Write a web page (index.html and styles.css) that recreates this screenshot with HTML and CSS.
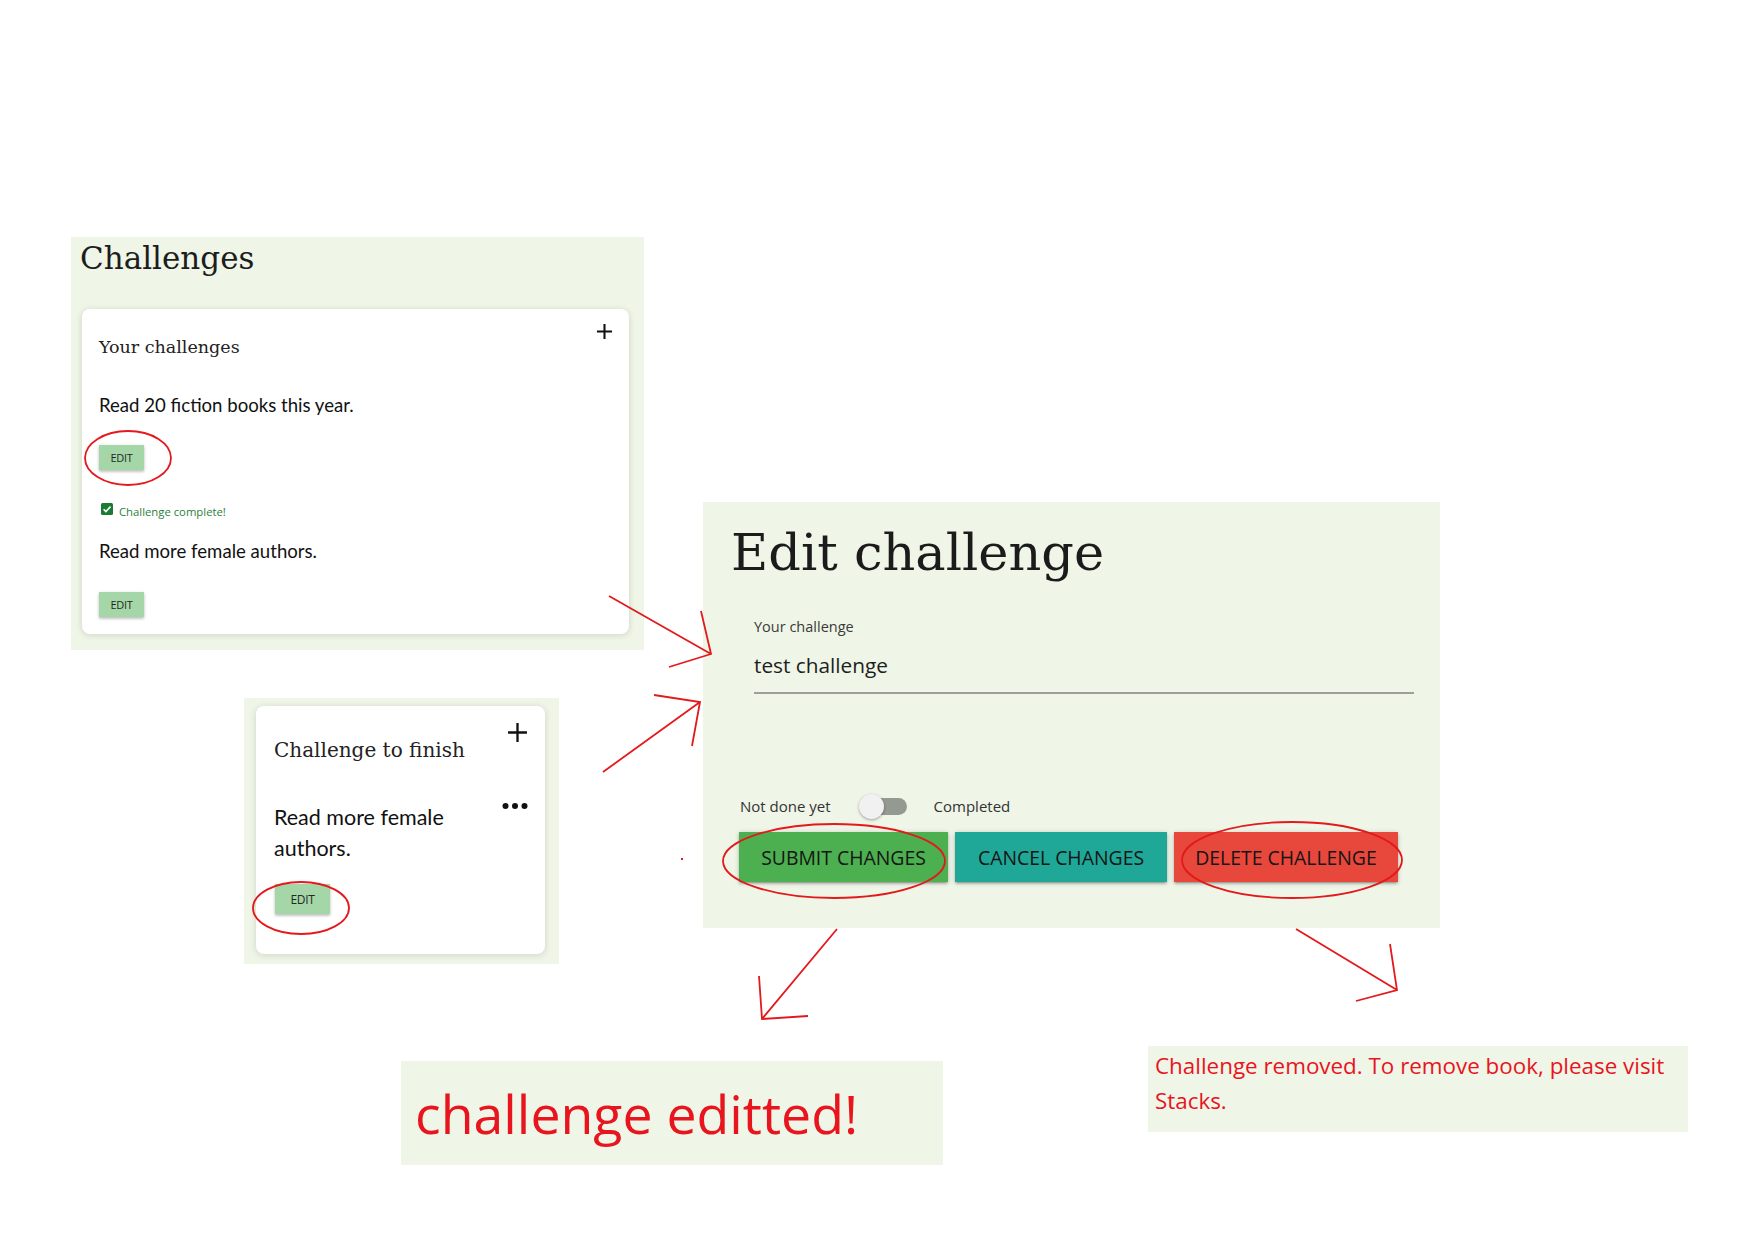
FILE: index.html
```html
<!DOCTYPE html>
<html lang="en">
<head>
<meta charset="utf-8">
<title>Challenges – annotated</title>
<link rel="stylesheet" href="styles.css">
</head>
<body>
<div class="canvas">

  <section class="panel panel-challenges">
    <h1 class="page-title">Challenges</h1>
    <div class="card card-main">
      <div class="card-head">
        <h2 class="card-title">Your challenges</h2>
        <svg class="plus" viewBox="0 0 18 18" aria-hidden="true"><path d="M9 1v16M1 9h16" stroke="#111" stroke-width="2.2" fill="none"/></svg>
      </div>
      <p class="challenge-text first">Read 20 fiction books this year.</p>
      <button class="btn-edit first-edit">EDIT</button>
      <label class="complete">
        <svg class="checkbox" viewBox="0 0 12 12" aria-hidden="true"><rect x="0" y="0" width="12" height="12" rx="1.5" fill="#1b7a34"/><path d="M2.6 6.2l2.3 2.4 4.6-5" stroke="#fff" stroke-width="1.6" fill="none"/></svg>
        <span>Challenge complete!</span>
      </label>
      <p class="challenge-text second">Read more female authors.</p>
      <button class="btn-edit second-edit">EDIT</button>
    </div>
  </section>

  <section class="panel panel-finish">
    <div class="card card-finish">
      <div class="finish-head">
        <h2 class="finish-title">Challenge to finish</h2>
        <svg class="plus plus-lg" viewBox="0 0 20 20" aria-hidden="true"><path d="M10 1v18M1 10h18" stroke="#111" stroke-width="2.2" fill="none"/></svg>
      </div>
      <div class="finish-body">
        <p class="finish-text">Read more female authors.</p>
        <svg class="dots" viewBox="0 0 26 8" aria-hidden="true"><circle cx="3.5" cy="4" r="3" fill="#111"/><circle cx="13" cy="4" r="3" fill="#111"/><circle cx="22.5" cy="4" r="3" fill="#111"/></svg>
      </div>
      <button class="btn-edit btn-edit-lg">EDIT</button>
    </div>
  </section>

  <section class="panel panel-edit">
    <h1 class="edit-title">Edit challenge</h1>
    <div class="field">
      <label class="field-label">Your challenge</label>
      <div class="field-input">test challenge</div>
    </div>
    <div class="switch-row">
      <span class="switch-label">Not done yet</span>
      <span class="lever"><span class="thumb"></span></span>
      <span class="switch-label">Completed</span>
    </div>
    <div class="actions">
      <button class="btn btn-submit">SUBMIT CHANGES</button>
      <button class="btn btn-cancel">CANCEL CHANGES</button>
      <button class="btn btn-delete">DELETE CHALLENGE</button>
    </div>
  </section>

  <section class="panel panel-msg-edit">
    <p class="msg-big">challenge editted!</p>
  </section>

  <section class="panel panel-msg-remove">
    <p class="msg-small">Challenge removed. To remove book, please visit Stacks.</p>
  </section>

  <svg class="annotations" viewBox="0 0 1739 1234" aria-hidden="true">
    <g fill="none" stroke="#e3191c" stroke-width="1.8">
      <ellipse cx="128" cy="458" rx="43" ry="27"/>
      <ellipse cx="301" cy="908" rx="48" ry="26"/>
      <ellipse cx="834" cy="861" rx="111" ry="37"/>
      <ellipse cx="1292" cy="860" rx="110" ry="38"/>
      <path d="M609 596L711 654M701 611L711 654L669 667"/>
      <path d="M603 772L700 702M654 695L700 702L692 746"/>
      <path d="M837 929L762 1019M759 976L762 1019L808 1016"/>
      <path d="M1296 929L1397 990M1390 944L1397 990L1356 1001"/>
    </g>
    <rect x="681" y="858" width="2" height="2" fill="#e3191c"/>
  </svg>
</div>
</body>
</html>
```

FILE: styles.css
```css
* { box-sizing: border-box; }

html, body {
  margin: 0;
  padding: 0;
  background: #ffffff;
}

.canvas {
  position: relative;
  width: 1739px;
  height: 1234px;
  overflow: hidden;
  font-family: "Lato", "Open Sans", sans-serif;
  color: #1c1c1c;
}

.panel {
  position: absolute;
  background: #eff5e7;
}

p, h1, h2 { margin: 0; }

button {
  border: none;
  cursor: pointer;
  font: inherit;
}

/* ---------- Challenges panel ---------- */
.panel-challenges {
  left: 71px;
  top: 237px;
  width: 573px;
  height: 413px;
  padding: 0 15px 0 11px;
  display: flex;
  flex-direction: column;
}

.page-title {
  font-family: "DejaVu Serif", serif;
  font-weight: 400;
  font-size: 31px;
  line-height: 40px;
  height: 72px;
  padding-top: 1px;
  margin-left: -2px;
  color: #1d1d1d;
}

.card {
  background: #ffffff;
  border-radius: 8px;
  box-shadow: 0 1px 6px rgba(60, 80, 50, 0.18);
}

.card-main {
  height: 325px;
  padding: 14px 16px 0 17px;
  display: flex;
  flex-direction: column;
  align-items: flex-start;
}

.card-head {
  width: 100%;
  display: flex;
  justify-content: space-between;
  align-items: flex-start;
}

.card-title {
  font-family: "DejaVu Serif", serif;
  font-weight: 400;
  font-size: 17.5px;
  line-height: 24px;
  margin-top: 12px;
  color: #222;
}

.plus {
  width: 17px;
  height: 17px;
  display: block;
}

.challenge-text {
  font-size: 18.6px;
  line-height: 22px;
  color: #111;
}

.challenge-text.first { margin-top: 35px; }
.challenge-text.second { margin-top: 21px; }

.btn-edit {
  background: #a5d6a7;
  color: #1f2a1f;
  font-family: "Open Sans", sans-serif;
  font-size: 11px;
  width: 45px;
  height: 25px;
  padding: 0;
  letter-spacing: -0.3px;
  box-shadow: 0 2px 2px rgba(0,0,0,0.14), 0 1px 4px rgba(0,0,0,0.16);
}

.first-edit { margin-top: 29px; }
.second-edit { margin-top: 30px; }

.complete {
  margin-top: 33px;
  margin-left: 2px;
  display: flex;
  align-items: center;
  gap: 6px;
  height: 16px;
  font-family: "Open Sans", sans-serif;
  font-size: 11.3px;
  color: #2a7f3a;
}

.checkbox {
  width: 12px;
  height: 12px;
  margin-top: -4px;
}

/* ---------- Challenge to finish ---------- */
.panel-finish {
  left: 244px;
  top: 698px;
  width: 315px;
  height: 266px;
  padding: 8px 14px 0 12px;
}

.card-finish {
  height: 248px;
  padding: 16px 17px 0 18px;
  display: flex;
  flex-direction: column;
  align-items: flex-start;
}

.finish-head {
  width: 100%;
  display: flex;
  justify-content: space-between;
  align-items: flex-start;
}

.finish-title {
  font-family: "DejaVu Serif", serif;
  font-weight: 400;
  font-size: 20px;
  line-height: 28px;
  margin-top: 14px;
  color: #222;
}

.plus-lg {
  width: 21px;
  height: 21px;
}

.finish-body {
  width: 100%;
  margin-top: 38px;
  display: flex;
  justify-content: space-between;
  align-items: flex-start;
  gap: 14px;
}

.finish-text {
  font-size: 21.5px;
  line-height: 31px;
  font-weight: 400;
  color: #111;
}

.dots {
  width: 26px;
  height: 8px;
  margin-top: 0px;
  flex: none;
}

.btn-edit-lg {
  width: 55px;
  height: 30px;
  font-size: 12px;
  margin-top: 20px;
  margin-left: 1px;
}

/* ---------- Edit challenge ---------- */
.panel-edit {
  left: 703px;
  top: 502px;
  width: 737px;
  height: 426px;
  padding: 20px 26px 0 28px;
}

.edit-title {
  font-family: "DejaVu Serif", serif;
  font-weight: 400;
  font-size: 51px;
  line-height: 62px;
  color: #1b1b1b;
}

.field {
  margin-left: 23px;
  margin-top: 35px;
  font-family: "Open Sans", sans-serif;
}

.field-label {
  display: block;
  font-size: 14.5px;
  line-height: 16px;
  color: #3a3a3a;
}

.field-input {
  margin-top: 18px;
  font-size: 20.8px;
  line-height: 24px;
  padding-bottom: 15px;
  border-bottom: 2px solid #9e9e9e;
  color: #1e1e1e;
}

.switch-row {
  margin-top: 100px;
  margin-left: 9px;
  height: 24px;
  display: flex;
  align-items: center;
  font-family: "Open Sans", sans-serif;
  font-size: 15px;
  color: #333;
}

.lever {
  position: relative;
  width: 46px;
  height: 17px;
  margin: 0 27px 0 30px;
  background: #949a92;
  border-radius: 9px;
}

.thumb {
  position: absolute;
  left: -2px;
  top: -4px;
  width: 25px;
  height: 25px;
  border-radius: 50%;
  background: #f1f1f1;
  box-shadow: 0 1px 3px rgba(0,0,0,0.35);
}

.actions {
  margin-top: 14px;
  margin-left: 8px;
  display: flex;
  gap: 7px;
}

.btn {
  height: 50px;
  font-family: "Open Sans", sans-serif;
  font-size: 19.4px;
  letter-spacing: 0;
  color: #151515;
  box-shadow: 0 2px 2px rgba(0,0,0,0.14), 0 3px 1px -2px rgba(0,0,0,0.12), 0 1px 5px rgba(0,0,0,0.2);
}

.btn-submit { width: 209px; background: #4caf50; }
.btn-cancel { width: 212px; background: #1fa898; }
.btn-delete { width: 224px; background: #e8473b; }

/* ---------- Messages ---------- */
.panel-msg-edit {
  left: 401px;
  top: 1061px;
  width: 542px;
  height: 104px;
  padding: 18px 0 0 14px;
}

.msg-big {
  font-family: "Open Sans", sans-serif;
  font-size: 53.6px;
  line-height: 70px;
  color: #e8141e;
}

.panel-msg-remove {
  left: 1148px;
  top: 1046px;
  width: 540px;
  height: 86px;
  padding: 2px 10px 0 7px;
}

.msg-small {
  font-family: "Open Sans", sans-serif;
  font-size: 22.4px;
  line-height: 35px;
  color: #e8141e;
}

/* ---------- Annotation overlay ---------- */
.annotations {
  position: absolute;
  left: 0;
  top: 0;
  width: 1739px;
  height: 1234px;
  pointer-events: none;
}
```
